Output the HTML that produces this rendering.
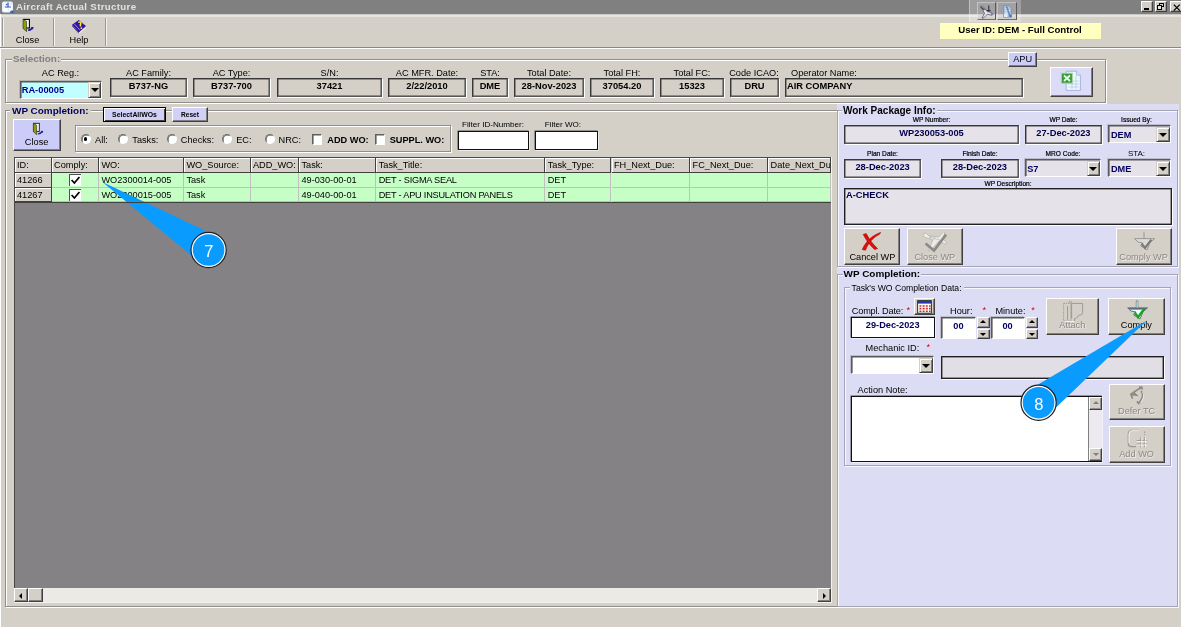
<!DOCTYPE html>
<html>
<head>
<meta charset="utf-8">
<title>Aircraft Actual Structure</title>
<style>
*{box-sizing:border-box;margin:0;padding:0}
html,body{width:1181px;height:633px;overflow:hidden;background:#d4d0c8;font-family:"Liberation Sans",Arial,sans-serif;font-size:9.2px;color:#000}
body{will-change:transform}
.a{position:absolute}
.t{position:absolute;white-space:nowrap;line-height:10px}
.b{font-weight:bold}
.c{text-align:center}
/* sunken read-only box */
.box{position:absolute;border:1px solid #383838;border-right-color:#585858;border-bottom-color:#585858;background:#d4d0c8;font-weight:bold;text-align:center;white-space:nowrap;overflow:hidden;font-size:9.3px;line-height:15.8px;box-shadow:1px 1px 0 #fff, inset 0 0 0 .5px #484848}
.inp{position:absolute;border:1px solid #101010;background:#fff;box-shadow:.6px .6px 0 #fff, -.5px -.5px 0 #505050}
.fs{position:absolute;border:1px solid #908e8a;box-shadow:1px 1px 0 #fff, inset 1px 1px 0 #fff}
.btn{position:absolute;background:#d4d0c8;border:1px solid #fff;border-right-color:#404040;border-bottom-color:#404040;box-shadow:inset -1px -1px 0 #808080;text-align:center;white-space:nowrap}
.lbtn{position:absolute;background:#d0d0f8;border:1px solid #fff;border-right-color:#404040;border-bottom-color:#404040;box-shadow:inset -1px -1px 0 #808080;text-align:center;white-space:nowrap}
.combo{position:absolute;border:1px solid #585858;border-right-color:#fff;border-bottom-color:#fff;background:#fff;box-shadow:-1px -1px 0 rgba(128,128,128,.35), inset .6px .6px 0 #585858}
.dd{position:absolute;background:#d4d0c8;border:1px solid #d4d0c8;border-right-color:#404040;border-bottom-color:#404040;box-shadow:inset 1px 1px 0 #fff, inset -1px -1px 0 #808080}
.dd:after{content:"";position:absolute;left:50%;top:50%;margin-left:-4px;margin-top:-2px;border:4px solid transparent;border-top-color:#000;border-bottom:0}
.radio{position:absolute;width:10px;height:10px;border-radius:50%;background:#fff;border:1px solid #707070;border-right-color:#fff;border-bottom-color:#fff;box-shadow:inset .6px .6px 0 #505050}
.chk{position:absolute;width:10.4px;height:10.4px;background:#fff;border:1px solid #606060;border-right-color:#fff;border-bottom-color:#fff;box-shadow:inset .6px .6px 0 #606060}
.hd{position:absolute;top:0;height:15px;background:#d4d0c8;border-right:1px solid #404040;border-bottom:1px solid #404040;box-shadow:inset 1px 1px 0 #fff;padding-left:2.4px;line-height:15.6px;white-space:nowrap;overflow:hidden}
.cell{position:absolute;height:14.6px;background:#c6ffc6;border-right:1px solid #c0c0c0;border-bottom:1px solid #c0c0c0;padding-left:2.4px;line-height:14.6px;white-space:nowrap;overflow:hidden}
.idc{background:#d4d0c8;border-right-color:#404040;border-bottom-color:#404040;box-shadow:inset 1px 1px 0 #fff}
.sm{font-size:6.6px;line-height:8px;font-weight:normal;-webkit-text-stroke:.2px #000}
.rb{background:#e6e2ea;color:#000050}
.rc{background:#e6e2ea}
.gchk{position:absolute;left:17.4px;top:1px;width:12px;height:12.4px;background:#fff;border-top:1px solid #505050;border-left:1px solid #505050}
.gchk svg{position:absolute;left:0;top:0}
.pf{border-color:#a4a4b4;box-shadow:1px 1px 0 #f8f8ff, inset 1px 1px 0 #f8f8ff}
.sp{box-shadow:inset -1px -1px 0 #909090}
.au,.ad{position:absolute;left:50%;top:50%;margin-left:-3px;border:3px solid transparent}
.au{margin-top:-2.4px;border-top:0;border-bottom:3.4px solid #000}
.ad{margin-top:-1.4px;border-bottom:0;border-top:3.4px solid #000}
.red{color:#d00000}
.navy{color:#000060}
.dis{color:#8a8886;text-shadow:.7px .7px 0 #eeece8}
</style>
</head>
<body>
<!-- title bar -->
<div class="a" style="left:0;top:0;width:1181px;height:14px;background:#808080"></div>
<div class="a" style="left:0;top:14px;width:1px;height:619px;background:#fff"></div>
<svg class="a" style="left:1px;top:0" width="14" height="14" viewBox="0 0 14 14">
 <rect x="1" y="1.5" width="11" height="11" rx="2" fill="#e8f0ff"/>
 <path d="M3 3h4v3H3zM8 5h3v5H8zM2.5 8h4v3.5h-4z" fill="#fff"/>
 <path d="M7 2.5v4M4 7h6M10.5 10.5l1.5 1.5M5 4l1 1" stroke="#3860b0" stroke-width="1.2" fill="none"/>
 <path d="M9 11.5h3.5v1.3H9z" fill="#2050a0"/>
</svg>
<div class="t b" style="left:16px;top:-.3px;font-size:9.7px;letter-spacing:.33px;color:#e4e2de;line-height:14px">Aircraft Actual Structure</div>
<!-- mini toolbar in title -->
<div class="a" style="left:969px;top:0;width:52.4px;height:22.4px;background:rgba(255,255,255,.24);border-left:1px solid rgba(255,255,255,.35);z-index:5"></div>
<div class="a" style="left:977.2px;top:2.3px;width:19.2px;height:18px;background:rgba(180,170,185,.25);border:1px solid rgba(255,255,255,.35);border-right-color:#585858;border-bottom-color:#707070;z-index:6">
 <svg width="18" height="16" viewBox="0 0 18 16" style="position:absolute;left:0;top:0"><path d="M2.4 3.4l2-.4 5 5.6 4.6 1.2 1 1.6-1.6.8-4-1-3.4 3.6-2 .4 2.6-5z" fill="#e8e6ee" stroke="#585860" stroke-width=".8"/><path d="M10.8 2.4v6M8.6 7.6h4" stroke="#303038" stroke-width="1.1"/><path d="M3 4l3.4 3" stroke="#404048" stroke-width="1.4"/><circle cx="14" cy="11" r="1.3" fill="#8080b0"/></svg>
</div>
<div class="a" style="left:996.8px;top:2.3px;width:19.8px;height:18px;background:rgba(180,170,185,.25);border:1px solid rgba(255,255,255,.3);border-right-color:#585858;border-bottom-color:#707070;z-index:6">
 <svg width="18" height="16" viewBox="0 0 18 16" style="position:absolute;left:0;top:0"><path d="M5.6 2.6h5.2l2.6 2.6v9H5.6z" fill="#a8c4e0" stroke="#7090b8" stroke-width=".8"/><path d="M7 5.4h3M7 7.6h5M7 9.8h5" stroke="#dceaf8" stroke-width="1"/><path d="M8.6 3.6l3.4 9.6" stroke="#6888b0" stroke-width="1.6"/><rect x="6" y="10.6" width="3.6" height="3.4" fill="#e0ecf8"/><circle cx="12.6" cy="13" r="1.2" fill="#5078b0"/></svg>
</div>
<!-- window controls -->
<div class="btn" style="left:1140.6px;top:1.1px;width:12.5px;height:11.2px;box-shadow:inset -.6px -.6px 0 #808080"><div class="a" style="left:2.8px;top:6.4px;width:4.8px;height:1.7px;background:#000"></div></div>
<div class="btn" style="left:1154.8px;top:1.1px;width:12.4px;height:11.2px;box-shadow:inset -.6px -.6px 0 #808080">
 <div class="a" style="left:3.6px;top:.8px;width:4.4px;height:4.4px;border:.9px solid #000;border-top-width:1.6px"></div>
 <div class="a" style="left:1.2px;top:3.2px;width:5px;height:4.6px;border:.9px solid #000;border-top-width:1.6px;background:#e8e6e2"></div>
</div>
<div class="btn" style="left:1170px;top:1.1px;width:12.5px;height:11.2px;box-shadow:inset -.6px -.6px 0 #808080">
 <svg width="10" height="9" viewBox="0 0 10 9" style="position:absolute;left:2px;top:.6px"><path d="M.8 1.6l6 6M6.8 1.6l-6 6" stroke="#000" stroke-width="1.3"/></svg>
</div>
<div class="a" style="left:1px;top:14px;width:1180px;height:2.6px;background:linear-gradient(#b8b6b2,#e8e6e2 40%,#e4e2dc)"></div>

<!-- toolbar -->
<div class="a" style="left:0;top:47.3px;width:1181px;height:1px;background:#8a8884"></div>
<div class="a" style="left:0;top:48.3px;width:1181px;height:1px;background:#fff"></div>
<div class="a" style="left:2px;top:18px;width:1px;height:28px;background:#9a9894"></div>
<div class="a" style="left:3px;top:18px;width:1px;height:28px;background:#f4f2ee"></div>
<div class="a" style="left:53px;top:18px;width:1px;height:28px;background:#9a9894"></div>
<div class="a" style="left:54px;top:18px;width:1px;height:28px;background:#f4f2ee"></div>
<div class="a" style="left:104.7px;top:18px;width:1px;height:28px;background:#9a9894"></div>
<div class="a" style="left:105.7px;top:18px;width:1px;height:28px;background:#f4f2ee"></div>
<!-- door icon -->
<svg class="a" style="left:21px;top:18px" width="14" height="16" viewBox="0 0 14 16">
 <rect x="2.6" y="1.4" width="5.8" height="8.6" fill="#fff" stroke="#000" stroke-width="1.1"/>
 <path d="M2 1.2L5.6 3.4V13.6L2 10.4z" fill="#8c9c10" stroke="#202800" stroke-width=".6"/>
 <path d="M7.2 11.2q2.4 0 3.2-1.4l-.6-.9 2.8.2-.7 2.6-.6-.8q-1.4 2.4-4.1 2z" fill="#1818a0"/>
</svg>
<div class="t c" style="left:4px;top:35px;width:47px">Close</div>
<!-- help icon -->
<svg class="a" style="left:71px;top:19px" width="17" height="15" viewBox="0 0 17 15">
 <path d="M1 5.8L7.8 1L15.2 7.2L7.8 13.8z" fill="#3414a8"/>
 <path d="M7.8 13.8L15.2 7.2L15.2 8.8L8 14.8L1.6 8.2L1 5.8z" fill="#f4f4ff"/>
 <path d="M1 5.8L7.8 13.8L8 14.8L1.4 7.6z" fill="#18085c"/>
 <path d="M7.2 3.4q2-1.2 2.6.4q.2 1.2-.6 2.2l.6 1.6" stroke="#ffe838" stroke-width="1.5" fill="none"/>
 <circle cx="10.4" cy="9.2" r=".9" fill="#ffe838"/>
 <path d="M3 4.6l6 6.6" stroke="#c8b8ff" stroke-width=".7"/>
</svg>
<div class="t c" style="left:56px;top:34.8px;width:46px">Help</div>

<!-- user box -->
<div class="a b c" style="left:939.5px;top:23.4px;width:161px;height:15.2px;background:#ffffc0;line-height:13.2px;font-size:9.64px">User ID: DEM - Full Control</div>

<!-- Selection fieldset -->
<div class="fs" style="left:5px;top:59px;width:1101px;height:44px"></div>
<div class="t b" style="left:12px;top:54px;font-size:9.9px;color:#808080;background:#d4d0c8;padding:0 1px">Selection:</div>

<div class="t c" style="left:20px;top:68.4px;width:81px">AC Reg.:</div>
<div class="combo" style="left:20px;top:81px;width:82px;height:18px;background:#c0ffff"><div class="t b" style="left:0.7px;top:3px;color:#000090;font-size:9.3px">RA-00005</div><div class="dd" style="right:0;top:0;width:13px;height:16px"></div></div>

<div class="t c" style="left:110px;top:68.4px;width:77px">AC Family:</div>
<div class="box" style="left:110px;top:78px;width:77px;height:19px">B737-NG</div>
<div class="t c" style="left:193px;top:68.4px;width:77px">AC Type:</div>
<div class="box" style="left:193px;top:78px;width:77px;height:19px">B737-700</div>
<div class="t c" style="left:277px;top:68.4px;width:105px">S/N:</div>
<div class="box" style="left:277px;top:78px;width:105px;height:19px">37421</div>
<div class="t c" style="left:388px;top:68.4px;width:78px">AC MFR. Date:</div>
<div class="box" style="left:388px;top:78px;width:78px;height:19px">2/22/2010</div>
<div class="t c" style="left:472px;top:68.4px;width:36px">STA:</div>
<div class="box" style="left:472px;top:78px;width:36px;height:19px">DME</div>
<div class="t c" style="left:514px;top:68.4px;width:70px">Total Date:</div>
<div class="box" style="left:514px;top:78px;width:70px;height:19px">28-Nov-2023</div>
<div class="t c" style="left:590px;top:68.4px;width:64px">Total FH:</div>
<div class="box" style="left:590px;top:78px;width:64px;height:19px">37054.20</div>
<div class="t c" style="left:660px;top:68.4px;width:64px">Total FC:</div>
<div class="box" style="left:660px;top:78px;width:64px;height:19px">15323</div>
<div class="t c" style="left:727px;top:68.4px;width:54px">Code ICAO:</div>
<div class="box" style="left:730px;top:78px;width:49px;height:19px">DRU</div>
<div class="t" style="left:791px;top:68.4px">Operator Name:</div>
<div class="box" style="left:785px;top:78px;width:238px;height:19px;text-align:left;padding-left:1px">AIR COMPANY</div>

<div class="lbtn" style="left:1008px;top:52px;width:29.3px;height:15.4px;line-height:13.6px;background:#ccccf8">APU</div>
<div class="lbtn" style="left:1050px;top:67px;width:43px;height:30px;background:#dcdcf8">
 <svg width="24" height="22" viewBox="0 0 24 22" style="position:absolute;left:8.5px;top:2px">
  <path d="M6.2 1.2h10.2l4 4V20.4H6.2z" fill="#f0f6ff" stroke="#9ab0d4" stroke-width=".9"/>
  <path d="M16.4 1.2v4h4" fill="#dce8f8" stroke="#9ab0d4" stroke-width=".8"/>
  <path d="M8 11h11M8 14h11M8 17h11M12 9v10M16 6v13" stroke="#b8cce8" stroke-width=".8"/>
  <rect x="1.4" y="3.2" width="11" height="10" fill="#3c9a3c" stroke="#a0d8a0" stroke-width="1"/>
  <path d="M4 5.5l6 5.5M10 5.5l-6 5.5" stroke="#e8ffe8" stroke-width="1.7"/>
 </svg>
</div>

<!-- WP Completion (left) fieldset -->
<div class="fs" style="left:5px;top:110px;width:833px;height:497px"></div>
<div class="t b navy" style="left:10px;top:105.5px;font-size:9.95px;background:#d4d0c8;padding:0 2px">WP Completion:</div>
<div class="lbtn" style="left:103px;top:107px;width:63px;height:15px;font-size:6.9px;font-weight:bold;line-height:13px;border:1px solid #000;box-shadow:inset 1px 1px 0 #fff, inset -1px -1px 0 #404040">SelectAllWOs</div>
<div class="lbtn" style="left:172px;top:107px;width:36px;height:15px;font-size:6.6px;font-weight:bold;line-height:13px">Reset</div>
<div class="lbtn" style="left:12.6px;top:119px;width:48.6px;height:32px;background:#ccccf8"><div class="t c" style="left:0;top:17.2px;width:46px">Close</div>
 <svg style="position:absolute;left:17px;top:1.5px" width="14" height="15" viewBox="0 0 14 16">
 <rect x="2.6" y="1.4" width="5.8" height="8.6" fill="#fff" stroke="#202020" stroke-width="1"/>
 <path d="M2 1.2L5.6 3.4V13.6L2 10.4z" fill="#8c9c10" stroke="#202800" stroke-width=".6"/>
 <path d="M7.2 11.6q2.4 0 3.2-1.4l-.6-.9 2.8.2-.7 2.6-.6-.8q-1.4 2.4-4.1 2z" fill="#1818c0"/>
 </svg></div>

<!-- radio group -->
<div class="fs" style="left:75px;top:125px;width:376px;height:27.4px"></div>
<div class="radio" style="left:80.5px;top:134px"></div><div class="a" style="left:83.7px;top:137.2px;width:3.6px;height:3.6px;background:#000;border-radius:50%"></div>
<div class="t" style="left:95px;top:134.7px">All:</div>
<div class="radio" style="left:118px;top:134px"></div><div class="t" style="left:132.3px;top:134.7px">Tasks:</div>
<div class="radio" style="left:166.5px;top:134px"></div><div class="t" style="left:180.8px;top:134.7px">Checks:</div>
<div class="radio" style="left:222.2px;top:134px"></div><div class="t" style="left:236.2px;top:134.7px">EC:</div>
<div class="radio" style="left:264.5px;top:134px"></div><div class="t" style="left:278.5px;top:134.7px">NRC:</div>
<div class="chk" style="left:312px;top:134.2px"></div><div class="t b" style="left:327.3px;top:134.7px">ADD WO:</div>
<div class="chk" style="left:375px;top:134.2px"></div><div class="t b" style="left:389.7px;top:134.7px">SUPPL. WO:</div>

<div class="t" style="left:462px;top:120.2px;font-size:8.1px">Filter ID-Number:</div>
<div class="inp" style="left:458px;top:131px;width:70.8px;height:19px"></div>
<div class="t" style="left:544.7px;top:120.2px;font-size:8.1px">Filter WO:</div>
<div class="inp" style="left:534.7px;top:131px;width:63.3px;height:19px"></div>

<!-- grid -->
<div class="a" style="left:14px;top:157px;width:817px;height:431px;background:#848284;border-top:1px solid #484848;border-left:1px solid #484848;overflow:hidden" id="grid">
 <div class="a" style="left:0;top:44.2px;width:817px;height:1px;background:#404040;z-index:2"></div>
 <div class="a" style="left:0;top:0;width:817px;height:15px;background:#d4d0c8"></div>
 <div class="a" style="left:36px;top:15px;width:781px;height:29.2px;background:#c6ffc6"></div>
 <div class="hd" style="left:-0.4px;width:37.1px">ID:</div>
 <div class="hd" style="left:36.7px;width:47.3px">Comply:</div>
 <div class="hd" style="left:84px;width:85px">WO:</div>
 <div class="hd" style="left:169px;width:66.5px">WO_Source:</div>
 <div class="hd" style="left:235.5px;width:48.6px">ADD_WO:</div>
 <div class="hd" style="left:284.1px;width:77.2px">Task:</div>
 <div class="hd" style="left:361.3px;width:169px">Task_Title:</div>
 <div class="hd" style="left:530.3px;width:66.2px">Task_Type:</div>
 <div class="hd" style="left:596.5px;width:78.7px">FH_Next_Due:</div>
 <div class="hd" style="left:675.2px;width:78px">FC_Next_Due:</div>
 <div class="hd" style="left:753.2px;width:63.3px">Date_Next_Du</div>
 <div class="cell idc" style="left:-0.4px;top:15px;width:37.1px">41266</div>
 <div class="cell" style="left:36.7px;top:15px;width:47.3px"><div class="gchk"><svg width="11" height="11" viewBox="0 0 11 11"><path d="M1.6 5l2.8 3 5-6" stroke="#000" stroke-width="1.7" fill="none"/></svg></div></div>
 <div class="cell" style="left:84px;top:15px;width:85px">WO2300014-005</div>
 <div class="cell" style="left:169px;top:15px;width:66.5px">Task</div>
 <div class="cell" style="left:235.5px;top:15px;width:48.6px"></div>
 <div class="cell" style="left:284.1px;top:15px;width:77.2px">49-030-00-01</div>
 <div class="cell" style="left:361.3px;top:15px;width:169px;letter-spacing:-.22px">DET - SIGMA SEAL</div>
 <div class="cell" style="left:530.3px;top:15px;width:66.2px">DET</div>
 <div class="cell" style="left:596.5px;top:15px;width:78.7px"></div>
 <div class="cell" style="left:675.2px;top:15px;width:78px"></div>
 <div class="cell" style="left:753.2px;top:15px;width:63.3px"></div>
 <div class="cell idc" style="left:-0.4px;top:29.6px;width:37.1px">41267</div>
 <div class="cell" style="left:36.7px;top:29.6px;width:47.3px"><div class="gchk"><svg width="11" height="11" viewBox="0 0 11 11"><path d="M1.6 5l2.8 3 5-6" stroke="#000" stroke-width="1.7" fill="none"/></svg></div></div>
 <div class="cell" style="left:84px;top:29.6px;width:85px">WO2300015-005</div>
 <div class="cell" style="left:169px;top:29.6px;width:66.5px">Task</div>
 <div class="cell" style="left:235.5px;top:29.6px;width:48.6px"></div>
 <div class="cell" style="left:284.1px;top:29.6px;width:77.2px">49-040-00-01</div>
 <div class="cell" style="left:361.3px;top:29.6px;width:169px;letter-spacing:-.22px">DET - APU INSULATION PANELS</div>
 <div class="cell" style="left:530.3px;top:29.6px;width:66.2px">DET</div>
 <div class="cell" style="left:596.5px;top:29.6px;width:78.7px"></div>
 <div class="cell" style="left:675.2px;top:29.6px;width:78px"></div>
 <div class="cell" style="left:753.2px;top:29.6px;width:63.3px"></div>
</div>
<div class="a" style="left:831px;top:157px;width:1px;height:445px;background:#f4f2ee"></div>
<div class="a" style="left:14px;top:602px;width:818px;height:1px;background:#f4f2ee"></div>
<div class="a" style="left:14px;top:588px;width:817px;height:14px;background:#eceae6" id="hsb">
 <div class="btn" style="left:0;top:0;width:14.4px;height:14px"><div class="a" style="left:4px;top:3.6px;border:3px solid transparent;border-right-color:#000;border-left:0"></div></div>
 <div class="btn" style="left:14.4px;top:0;width:14.4px;height:14px"></div>
 <div class="btn" style="right:0;top:0;width:14.4px;height:14px"><div class="a" style="left:5px;top:3.6px;border:3px solid transparent;border-left-color:#000;border-right:0"></div></div>
</div>

<!-- right panel -->
<div class="a" style="left:837px;top:104.3px;width:341.6px;height:502.6px;background:#dcdcf5" id="rp"></div>
<div class="fs pf" style="left:837px;top:110px;width:341px;height:157.4px"></div>
<div class="t b" style="left:842px;top:105.8px;font-size:10px;background:#dcdcf5;padding:0 1px">Work Package Info:</div>

<div class="t b c sm" style="left:844px;top:116.4px;width:175px">WP Number:</div>
<div class="box rb" style="left:844px;top:125.3px;width:175px;height:19px">WP230053-005</div>
<div class="t b c sm" style="left:1025px;top:116.4px;width:77px">WP Date:</div>
<div class="box rb" style="left:1024.6px;top:125.3px;width:77.6px;height:19px">27-Dec-2023</div>
<div class="t b c sm" style="left:1105.5px;top:116.4px;width:62px">Issued By:</div>
<div class="combo rc" style="left:1108.4px;top:125.3px;width:62.4px;height:18.2px"><div class="t b navy" style="left:1.6px;top:3.4px">DEM</div><div class="dd" style="right:0;top:.6px;width:13.6px;height:15.6px"></div></div>

<div class="t b c sm" style="left:844px;top:150px;width:77px">Plan Date:</div>
<div class="box rb" style="left:844px;top:159.4px;width:77.2px;height:18.6px">28-Dec-2023</div>
<div class="t b c sm" style="left:941px;top:150px;width:78px">Finish Date:</div>
<div class="box rb" style="left:940.8px;top:159.4px;width:78.2px;height:18.6px">28-Dec-2023</div>
<div class="t b c sm" style="left:1025px;top:150px;width:76px">MRO Code:</div>
<div class="combo rc" style="left:1024.6px;top:159.2px;width:76.6px;height:18.2px"><div class="t b navy" style="left:1.6px;top:3.4px">S7</div><div class="dd" style="right:0;top:.6px;width:13.6px;height:15.6px"></div></div>
<div class="t c" style="left:1105.5px;top:148.6px;width:62px;font-size:8px">STA:</div>
<div class="combo rc" style="left:1108.4px;top:159.2px;width:62.4px;height:18.2px"><div class="t b navy" style="left:1.6px;top:3.4px">DME</div><div class="dd" style="right:0;top:.6px;width:13.6px;height:15.6px"></div></div>

<div class="t b c sm" style="left:844px;top:180px;width:328px">WP Description:</div>
<div class="box rb" style="left:844px;top:188.4px;width:328px;height:36.6px;text-align:left;padding-left:1px;line-height:13.4px;border-color:#202020">A-CHECK</div>

<div class="btn" style="left:844.4px;top:228.3px;width:56px;height:36.8px"><div class="t c" style="left:0;top:22.6px;width:54px">Cancel WP</div>
 <svg style="position:absolute;left:15px;top:2px" width="24" height="21" viewBox="0 0 24 21"><path d="M2.2 18.6C6 10 12 4.6 20.6 1.4L19.8 3C13 6.8 8 12 5.6 19.2z" fill="#d81010" stroke="#c00000" stroke-width=".6"/><path d="M3.2 3.4L6.2 2.6C9.4 8.4 12.4 12.8 17.6 17.6L14.6 18.6C9.6 13.6 6 9 3.2 3.4z" fill="#d81010" stroke="#c00000" stroke-width=".6"/></svg>
</div>
<div class="btn" style="left:906.8px;top:228.3px;width:56px;height:36.8px"><div class="t c dis" style="left:0;top:22.6px;width:54px">Close WP</div>
 <svg style="position:absolute;left:12px;top:1px" width="30" height="24" viewBox="0 0 30 24"><path d="M3 4l3-1 3 3 10 1 4-5 2 0-2 7 4 4-2 1-6-3-8 9-3 1 5-11-9-3z" fill="#ecebe6" stroke="#b8b6b0" stroke-width=".8"/><path d="M9 7l11 3M11 5l-1 4M15 6l-1 4" stroke="#b8b6b0" stroke-width=".7"/><path d="M5.6 13.6L14 20.6L26 4.6" stroke="#8c8a88" stroke-width="2.6" fill="none"/></svg>
</div>
<div class="btn" style="left:1115.6px;top:228.3px;width:56px;height:36.8px"><div class="t c dis" style="left:0;top:22.6px;width:54px">Comply WP</div>
 <svg style="position:absolute;left:16px;top:1.6px" width="24" height="21" viewBox="0 0 24 21"><path d="M11 .6V8M1.6 7.6H21.6L17 11.6L14 19L10.6 16.6L7.6 15L10 12L5 11Z" fill="#dcdad4" stroke="#9a9894" stroke-width="1" stroke-linejoin="round"/><path d="M8.6 12.6L12 17L18.4 8.6" stroke="#7c7a78" stroke-width="2.2" fill="none"/></svg>
</div>

<div class="fs pf" style="left:837px;top:274px;width:341px;height:332.6px"></div>
<div class="t b" style="left:842.6px;top:269.2px;font-size:9.95px;background:#dcdcf5;padding:0 1px">WP Completion:</div>
<div class="fs pf" style="left:844.4px;top:287.4px;width:326.4px;height:179px"></div>
<div class="t" style="left:849.6px;top:283px;font-size:8.65px;background:#dcdcf5;padding:0 2px">Task's WO Completion Data:</div>

<div class="t" style="left:851.8px;top:306px;letter-spacing:-.2px">Compl. Date: <span class="red" style="position:relative;left:1px;top:-.6px">*</span></div>
<div class="btn" style="left:913.8px;top:297.6px;width:21px;height:17.8px">
 <svg style="position:absolute;left:2.6px;top:1px" width="15" height="14" viewBox="0 0 15 14"><rect x=".6" y=".6" width="13.8" height="12.6" fill="#fff" stroke="#303030" stroke-width="1"/><rect x="1" y="1" width="13" height="2.6" fill="#2038b0"/><path d="M2.4 5.2h2v1.6h-2zM5.6 5.2h2v1.6h-2zM8.8 5.2h2v1.6h-2zM12 5.2h1.6v1.6H12zM2.4 7.8h2v1.6h-2zM5.6 7.8h2v1.6h-2zM8.8 7.8h2v1.6h-2zM12 7.8h1.6v1.6H12zM2.4 10.4h2V12h-2zM5.6 10.4h2V12h-2zM8.8 10.4h2V12h-2zM12 10.4h1.6V12H12z" fill="#c03030"/></svg>
</div>
<div class="inp" style="left:850.7px;top:317px;width:84.3px;height:21.3px"><div class="t b c navy" style="left:0;top:1.8px;width:82px">29-Dec-2023</div></div>

<div class="t" style="left:950px;top:306px">Hour:</div><div class="t red" style="left:982.6px;top:304.6px">*</div>
<div class="combo" style="left:941.4px;top:317.4px;width:35px;height:21.4px"><div class="t b c navy" style="left:0;top:3px;width:32px">00</div></div>
<div class="btn sp" style="left:977px;top:317px;width:12.6px;height:10.8px"><i class="au"></i></div><div class="btn sp" style="left:977px;top:328.6px;width:12.6px;height:10.8px"><i class="ad"></i></div>
<div class="t" style="left:995.4px;top:306px">Minute:</div><div class="t red" style="left:1031.2px;top:304.6px">*</div>
<div class="combo" style="left:990.6px;top:317.4px;width:34.6px;height:21.4px"><div class="t b c navy" style="left:0;top:3px;width:32px">00</div></div>
<div class="btn sp" style="left:1025.8px;top:317px;width:12.6px;height:10.8px"><i class="au"></i></div><div class="btn sp" style="left:1025.8px;top:328.6px;width:12.6px;height:10.8px"><i class="ad"></i></div>

<div class="btn" style="left:1045.8px;top:297.6px;width:53.2px;height:37px"><div class="t c dis" style="left:0;top:21.8px;width:51px">Attach</div>
 <svg style="position:absolute;left:14px;top:1px" width="24" height="23" viewBox="0 0 24 23"><path d="M8 3.4V1.4h2.4v2M2.6 3.4h7.2V21H2.6z" fill="none" stroke="#9c9a96" stroke-width=".9" stroke-dasharray="1.4 .8"/><path d="M10.6 3.4h11v9.4c0 3-4 1.6-4.6 3.2-.6 1.8-1.8 2.4-3.4 2.6V21M6.6 6V20M10.6 3.4V18.6" fill="none" stroke="#9c9a96" stroke-width="1"/><path d="M3.6 21.6h9.6" stroke="#fff" stroke-width=".8"/></svg>
</div>
<div class="btn" style="left:1108.4px;top:297.6px;width:56.4px;height:37px"><div class="t c" style="left:0;top:21.8px;width:54px">Comply</div>
 <svg style="position:absolute;left:17px;top:1.4px" width="24" height="21" viewBox="0 0 24 21"><path d="M11 .6V8.4M1.6 7.8H21.6L17 11.6L14 19L10.6 16.6L7.6 15L10 12L5 11Z" fill="#e8ffff" stroke="#506878" stroke-width=".9" stroke-linejoin="round"/><path d="M2.4 8.2H20.6L19 9.6H4z" fill="#404858"/><path d="M10.2 1v7h1.8V1z" fill="#c8f0f8" stroke="#506070" stroke-width=".5"/><path d="M8.6 12.4L12 17.2L18.4 8.8" stroke="#20a020" stroke-width="2.4" fill="none"/></svg>
</div>

<div class="t" style="left:865.6px;top:343.2px">Mechanic ID:</div><div class="t red" style="left:926.6px;top:342.4px">*</div>
<div class="combo" style="left:850.7px;top:356.4px;width:83.4px;height:17.4px"><div class="dd" style="right:0;top:.4px;width:14px;height:15.6px"></div></div>
<div class="box" style="left:941.4px;top:356.2px;width:223px;height:22.6px;border-color:#202020;background:#e2dee6"></div>

<div class="t" style="left:857.6px;top:384.6px">Action Note:</div>
<div class="inp" style="left:850.7px;top:396.2px;width:251.4px;height:65.6px;border-right:0">
 <div class="a" style="right:0;top:0;width:13.6px;height:63.6px;background:#eceaf0;border-left:1px solid #808080"></div>
 <div class="btn sp" style="right:0;top:0;width:13px;height:12.6px"><i class="au" style="border-bottom-color:#808080"></i></div>
 <div class="btn sp" style="right:0;bottom:0;width:13px;height:12.6px"><i class="ad" style="border-top-color:#808080"></i></div>
</div>

<div class="btn" style="left:1108.6px;top:383.6px;width:56.2px;height:36.6px"><div class="t c dis" style="left:0;top:21.2px;width:54px">Defer TC</div>
 <svg style="position:absolute;left:19px;top:1px" width="17" height="21" viewBox="0 0 17 21"><path d="M12.6 1.2L4.4 6.4L7.4 9.2L2 8.4L3.6 12.6M4.4 6.4L2 8.4" fill="none" stroke="#8a8884" stroke-width="1.6"/><path d="M13.4 3.6L12.6 1.2L10 1.4M12 5.2C15 8 14 12 9.6 17.4L8 15.4M9.6 17.4L12 17" fill="none" stroke="#8a8884" stroke-width="1.7"/><path d="M13.4 6.2C15.6 9 14.6 13 10.6 18" fill="none" stroke="#fff" stroke-width=".7"/></svg>
</div>
<div class="btn" style="left:1108.6px;top:426.4px;width:56.2px;height:36.4px"><div class="t c dis" style="left:0;top:22px;width:54px">Add WO</div>
 <svg style="position:absolute;left:16.6px;top:1.4px" width="23" height="20" viewBox="0 0 23 20"><path d="M12 1.4H5.6Q2.4 1.6 2.2 5V14.6Q2.4 17.4 5 17.6H10" fill="none" stroke="#9c9a96" stroke-width="1.1"/><path d="M12.6 1.6H6Q3.2 1.8 3 5V14" fill="none" stroke="#fff" stroke-width=".8"/><path d="M18.6 2.4V6" stroke="#9c9a96" stroke-width="1" stroke-dasharray="1.6 1"/><path d="M14.8 8V18.4M18.4 8V18.4M10.6 11.6H21M10.6 15H21" stroke="#9c9a96" stroke-width="1"/><path d="M15.8 8V18.4M19.4 8V18.4M10.6 12.6H21M10.6 16H21" stroke="#fff" stroke-width=".7"/></svg>
</div>

<div class="a" style="left:0;top:627px;width:1181px;height:6px;background:#fff"></div>
<!-- callouts -->
<svg class="a" style="left:0;top:0" width="1181" height="633" viewBox="0 0 1181 633">
 <polygon points="102.4,182 209,232.5 192,256" fill="#0a9bff"/>
 <circle cx="208.6" cy="250" r="17.6" fill="#fff" stroke="#202020" stroke-width="1.2"/>
 <circle cx="208.6" cy="250" r="15.8" fill="#0a9bff"/>
 <text x="208.8" y="256.8" text-anchor="middle" font-family="Liberation Sans, Arial, sans-serif" font-size="16.5" fill="#fff">7</text>
 <polygon points="1146.8,320.5 1035.5,386 1055.5,408" fill="#0a9bff"/>
 <circle cx="1038.6" cy="402.7" r="17.6" fill="#fff" stroke="#202020" stroke-width="1.2"/>
 <circle cx="1038.6" cy="402.7" r="15.8" fill="#0a9bff"/>
 <text x="1038.8" y="409.8" text-anchor="middle" font-family="Liberation Sans, Arial, sans-serif" font-size="16.5" fill="#fff">8</text>
</svg>
</body>
</html>
